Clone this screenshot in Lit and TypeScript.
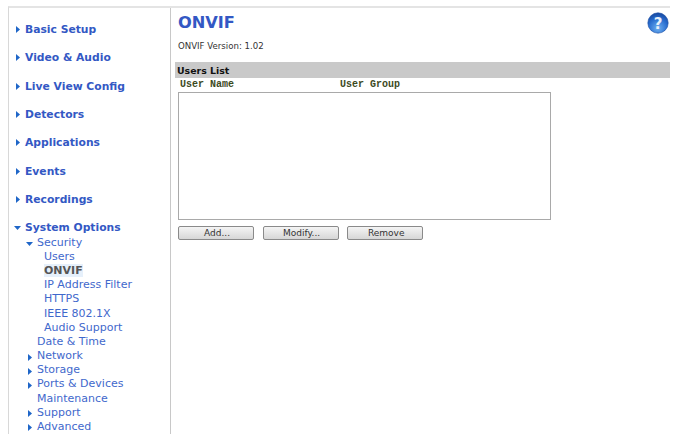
import { LitElement, html, css, svg } from "lit";
import { customElement } from "lit/decorators.js";

const right = svg`<svg class="arrow" width="4" height="7" viewBox="0 0 4 7"><path d="M0 0L4 3.5L0 7Z" fill="#1f66c8"/></svg>`;
const down = svg`<svg class="arrow" width="7" height="4" viewBox="0 0 7 4"><path d="M0 0H7L3.5 4Z" fill="#1f66c8"/></svg>`;

@customElement("app-root")
export class AppRoot extends LitElement {
  static styles = css`
    :host { display: block; width: 681px; height: 434px; overflow: hidden; background: #fff; font-family: "DejaVu Sans", Verdana, sans-serif; }
    .frame { margin: 6px 0 0 8px; width: 662px; height: 428px; border-top: 2px solid #e4e4e4; border-left: 1px solid #d8d8d8; display: flex; box-sizing: border-box; }
    .side { width: 161px; border-right: 1px solid #c8c8c8; box-sizing: content-box; padding-top: 14.4px; display: flex; flex-direction: column; flex: none; }
    .top { display: flex; align-items: center; height: 14.17px; margin-bottom: 14.2px; font-size: 10.75px; font-weight: 700; color: #3358c4; white-space: nowrap; }
    .top .ic { width: 16px; padding-left: 7px; box-sizing: border-box; display: flex; align-items: center; }
    .top.open { margin-bottom: 0.3px; }
    .top.open .ic { padding-left: 5px; }
    .sub { display: flex; align-items: center; height: 14.17px; font-size: 11px; color: #3f68cc; white-space: nowrap; padding-left: 28px; }
    .sub.arr { padding-left: 19px; }
    .sub.arr .arrow { margin-right: 5px; margin-top: 3px; }
    .sub.exp { padding-left: 17px; }
    .sub.exp .arrow { margin-right: 4px; margin-top: 3px; }
    .leaf { padding-left: 35px; }
    .cur { font-weight: 700; color: #555; }
    .cur span { background: #e6f0fb; }
    .main { flex: 1; padding: 5px 0 0 4px; position: relative; min-width: 0; }
    h1 { margin: 0 0 0 3px; font-size: 16.2px; line-height: 20px; font-weight: 700; color: #3358c4; }
    .ver { margin: 7px 0 0 3px; font-size: 8.6px; line-height: 12px; color: #333; }
    .bar { margin-top: 10px; height: 16px; background: #c9c9c9; font-size: 9.4px; font-weight: 700; line-height: 17px; color: #111; padding-left: 2px; }
    .cols { display: flex; font-family: "Liberation Mono", monospace; font-weight: 700; font-size: 10px; line-height: 13px; color: #3d4a1e; padding-left: 5px; }
    .cols span:first-child { width: 160px; }
    .box { margin: 1px 0 0 3px; width: 373px; height: 128px; box-sizing: border-box; border: 1px solid #a9a9a9; background: #fff; }
    .btns { display: flex; gap: 8.6px; margin: 6px 0 0 3px; }
    button { width: 76px; height: 14px; padding: 0 0 0 2px; box-sizing: border-box; font: 9px "DejaVu Sans", Verdana, sans-serif; color: #333; border: 1px solid #8a8a8a; border-radius: 2px; background: linear-gradient(#f4f4f4, #d6d6d6); }
    .help { position: absolute; top: 4px; right: 1px; }
  `;
  render() {
    const tops = ["Basic Setup", "Video & Audio", "Live View Config", "Detectors", "Applications", "Events", "Recordings"];
    return html`<div class="frame">
      <nav class="side">
        ${tops.map((t) => html`<div class="top"><span class="ic">${right}</span>${t}</div>`)}
        <div class="top open"><span class="ic">${down}</span>System Options</div>
        <div class="sub exp">${down}Security</div>
        <div class="sub leaf">Users</div>
        <div class="sub leaf cur"><span>ONVIF</span></div>
        <div class="sub leaf">IP Address Filter</div>
        <div class="sub leaf">HTTPS</div>
        <div class="sub leaf">IEEE 802.1X</div>
        <div class="sub leaf">Audio Support</div>
        <div class="sub">Date &amp; Time</div>
        <div class="sub arr">${right}Network</div>
        <div class="sub arr">${right}Storage</div>
        <div class="sub arr">${right}Ports &amp; Devices</div>
        <div class="sub">Maintenance</div>
        <div class="sub arr">${right}Support</div>
        <div class="sub arr">${right}Advanced</div>
      </nav>
      <main class="main">
        <h1>ONVIF</h1>
        <div class="ver">ONVIF Version: 1.02</div>
        <div class="bar">Users List</div>
        <div class="cols"><span>User Name</span><span>User Group</span></div>
        <div class="box"></div>
        <div class="btns"><button>Add...</button><button>Modify...</button><button>Remove</button></div>
        <svg class="help" width="22" height="22" viewBox="0 0 22 22">
          <defs><radialGradient id="g" cx="0.5" cy="0.75" r="0.75"><stop offset="0" stop-color="#6fb0f0"/><stop offset="0.6" stop-color="#2a6fd0"/><stop offset="1" stop-color="#17479e"/></radialGradient></defs>
          <circle cx="11" cy="11" r="10.2" fill="url(#g)" stroke="#1b4fa6" stroke-width="0.6"/>
          <text x="11" y="16.5" text-anchor="middle" font-family="DejaVu Sans" font-weight="700" font-size="15" fill="#e8f0fa">?</text>
        </svg>
      </main>
    </div>`;
  }
}
